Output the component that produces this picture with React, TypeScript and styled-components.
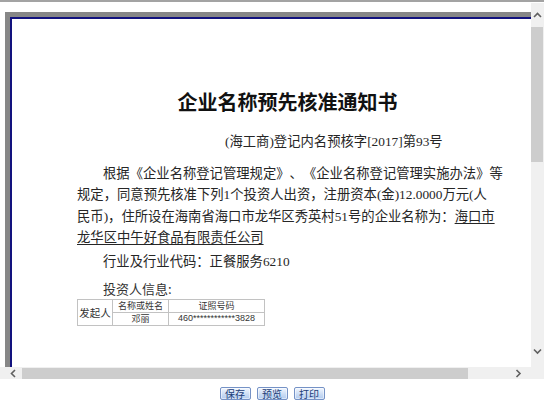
import React from "react";
import styled, { createGlobalStyle } from "styled-components";

const GlobalStyle = createGlobalStyle`
  html, body {
    margin: 0;
    padding: 0;
    background: #fff;
  }
  body {
    font-family: "Liberation Serif", "Noto Sans CJK SC", serif;
    color: #262626;
    text-spacing-trim: space-all;
  }
`;

const Wrapper = styled.div`
  width: 554px;
  height: 419px;
  overflow: hidden;
`;

const Frame = styled.div`
  width: 544px;
  border-top: 2px solid #a3a3a3;
  padding-top: 1px;
  display: grid;
  grid-template-columns: 531px 13px;
  grid-template-rows: 364px 12px;
`;

const Viewport = styled.div`
  overflow: hidden;
  padding: 9px 0 0 5px;
  background: #fff;
`;

const Page = styled.div`
  width: 600px;
  height: 560px;
  border: 5px solid #878787;
`;

const PageInner = styled.div`
  height: 100%;
  box-sizing: border-box;
  border: 2px solid #12127e;
  padding: 69px 0 0 65px;
`;

const Content = styled.div`
  width: 421px;
`;

const Title = styled.h1`
  margin: 0;
  font-family: "Noto Sans CJK SC", sans-serif;
  font-size: 20px;
  font-weight: 700;
  line-height: 28px;
  text-align: center;
  color: #111;
`;

const DocNo = styled.div`
  margin-top: 16px;
  padding-left: 148px;
  font-size: 13.33px;
  line-height: 20px;
  white-space: nowrap;
`;

const Para = styled.p<{ $gap: number }>`
  margin: ${(p) => p.$gap}px 0 0;
  font-size: 13.33px;
  line-height: 21.33px;
  text-indent: 26px;
  white-space: nowrap;
`;

const Underline = styled.span`
  text-decoration: underline;
  text-underline-offset: 2px;
`;

const Label = styled.div`
  margin-top: 10px;
  padding-left: 26px;
  font-family: "Noto Sans CJK SC", sans-serif;
  font-size: 13px;
  line-height: 12px;
  color: #333;
`;

const InfoTable = styled.table`
  margin-top: 4px;
  border-collapse: collapse;
  font-family: "Noto Sans CJK SC", sans-serif;
  color: #333;
`;

const Cell = styled.td<{ $w?: number; $size: number; $latin?: boolean }>`
  border: 1px solid #c2c2c2;
  padding: 0;
  height: 12px;
  width: ${(p) => (p.$w ? `${p.$w}px` : "auto")};
  text-align: center;
  font-size: ${(p) => p.$size}px;
  font-family: ${(p) =>
    p.$latin ? `"Liberation Sans", sans-serif` : `"Noto Sans CJK SC", sans-serif`};
  line-height: 11px;
  white-space: nowrap;
`;

const VScroll = styled.div`
  background: #f0f0f0;
  display: flex;
  flex-direction: column;
`;

const HScroll = styled.div`
  background: #f0f0f0;
  display: flex;
  align-items: stretch;
`;

const Corner = styled.div`
  background: #f0f0f0;
`;

const VArrow = styled.div<{ $bottom?: boolean }>`
  height: 24px;
  display: flex;
  align-items: center;
  justify-content: center;
  margin-top: ${(p) => (p.$bottom ? "auto" : "0")};
  margin-bottom: ${(p) => (p.$bottom ? "4px" : "0")};
`;

const HArrow = styled.div<{ $right?: boolean }>`
  width: ${(p) => (p.$right ? "26px" : "22px")};
  box-sizing: border-box;
  padding-left: ${(p) => (p.$right ? "0" : "4px")};
  display: flex;
  align-items: center;
  justify-content: center;
  margin-left: ${(p) => (p.$right ? "auto" : "0")};
`;

const VThumb = styled.div`
  height: 135px;
  margin: 0 1px 0 0;
  background: #cdcdcd;
`;

const HThumb = styled.div`
  width: 446px;
  margin: 1px 0 0;
  background: #cdcdcd;
`;

const ButtonBar = styled.div`
  width: 544px;
  display: flex;
  justify-content: center;
  gap: 6px;
  padding-top: 8px;
`;

const Button = styled.button`
  width: 31px;
  height: 13px;
  box-sizing: border-box;
  padding: 0;
  border: 1px solid #7592c6;
  border-radius: 2px;
  background: linear-gradient(#f2f7fe, #c9dbf4 60%, #b3ccef);
  box-shadow: inset 0 0 0 1px rgba(255, 255, 255, 0.5);
  font-family: "Noto Sans CJK SC", sans-serif;
  font-size: 10px;
  line-height: 10px;
  color: #1c3d78;
  cursor: pointer;
`;

function Chevron({ dir }: { dir: "up" | "down" | "left" | "right" }) {
  const d = {
    up: "M1 5 L4.5 1.5 L8 5",
    down: "M1 1.5 L4.5 5 L8 1.5",
    left: "M5 1 L1.5 4.5 L5 8",
    right: "M1.5 1 L5 4.5 L1.5 8",
  }[dir];
  const vertical = dir === "up" || dir === "down";
  return (
    <svg
      width={vertical ? 9 : 7}
      height={vertical ? 7 : 9}
      viewBox={vertical ? "0 0 9 7" : "0 0 7 9"}
    >
      <path d={d} fill="none" stroke="#606060" strokeWidth="1.6" />
    </svg>
  );
}

export default function App() {
  return (
    <Wrapper>
      <GlobalStyle />
      <Frame>
        <Viewport>
          <Page>
            <PageInner>
              <Content>
                <Title>企业名称预先核准通知书</Title>
                <DocNo>(海工商)登记内名预核字[2017]第93号</DocNo>
                <Para $gap={11}>
                  根据《企业名称登记管理规定》、《企业名称登记管理实施办法》等
                  <br />
                  规定，同意预先核准下列1个投资人出资，注册资本(金)12.0000万元(人
                  <br />
                  民币)，住所设在海南省海口市龙华区秀英村51号的企业名称为：
                  <Underline>
                    海口市
                    <br />
                    龙华区中午好食品有限责任公司
                  </Underline>
                </Para>
                <Para $gap={3}>行业及行业代码：正餐服务6210</Para>
                <Label>投资人信息:</Label>
                <InfoTable>
                  <tbody>
                    <tr>
                      <Cell $w={34} $size={10.5} rowSpan={2}>
                        发起人
                      </Cell>
                      <Cell $w={55} $size={9}>
                        名称或姓名
                      </Cell>
                      <Cell $w={95} $size={9}>
                        证照号码
                      </Cell>
                    </tr>
                    <tr>
                      <Cell $size={9}>邓丽</Cell>
                      <Cell $size={9} $latin>
                        460************3828
                      </Cell>
                    </tr>
                  </tbody>
                </InfoTable>
              </Content>
            </PageInner>
          </Page>
        </Viewport>
        <VScroll>
          <VArrow>
            <Chevron dir="up" />
          </VArrow>
          <VThumb />
          <VArrow $bottom>
            <Chevron dir="down" />
          </VArrow>
        </VScroll>
        <HScroll>
          <HArrow>
            <Chevron dir="left" />
          </HArrow>
          <HThumb />
          <HArrow $right>
            <Chevron dir="right" />
          </HArrow>
        </HScroll>
        <Corner />
      </Frame>
      <ButtonBar>
        <Button>保存</Button>
        <Button>预览</Button>
        <Button>打印</Button>
      </ButtonBar>
    </Wrapper>
  );
}
